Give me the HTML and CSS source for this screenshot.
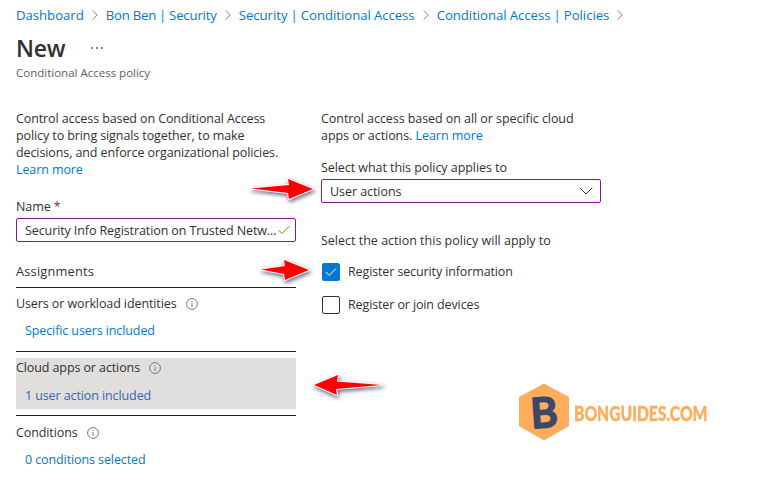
FILE: index.html
```html
<!DOCTYPE html>
<html lang="en">
<head>
    <meta charset="UTF-8">
    <meta name="viewport" content="width=device-width, initial-scale=1.0">
    <title>New - Conditional Access policy</title>
    <link rel="stylesheet" href="styles.css">
</head>
<body>
    <nav class="breadcrumb">
        <a href="#">Dashboard</a>
        <svg class="chevron" viewBox="0 0 6 10"><path d="M0.7 0.5L5.2 5L0.7 9.5"/></svg>
        <a class="tenant" href="#">Bon Ben | Security</a>
        <svg class="chevron" viewBox="0 0 6 10"><path d="M0.7 0.5L5.2 5L0.7 9.5"/></svg>
        <a href="#">Security | Conditional Access</a>
        <svg class="chevron" viewBox="0 0 6 10"><path d="M0.7 0.5L5.2 5L0.7 9.5"/></svg>
        <a href="#">Conditional Access | Policies</a>
        <svg class="chevron" viewBox="0 0 6 10"><path d="M0.7 0.5L5.2 5L0.7 9.5"/></svg>
    </nav>
    <header class="header">
        <div class="title-row">
            <h1>New</h1>
            <svg class="more" viewBox="0 0 12 2"><path d="M0 0h2v2H0zM5 0h2v2H5zM10 0h2v2h-2z"/></svg>
        </div>
        <p class="subtitle">Conditional Access policy</p>
    </header>
    <main class="columns">
        <section class="column">
            <p class="intro">Control access based on Conditional Access<br>policy to bring signals together, to make<br>decisions, and enforce organizational policies.<br><a href="#">Learn more</a></p>
            <div class="label name-label">Name <span class="required">*</span></div>
            <div class="field">
                <span>Security Info Registration on Trusted Netw...</span>
                <svg class="valid" viewBox="0 0 12 10"><path d="M0.5 5L4 8.5L11.5 1"/></svg>
            </div>
            <h2>Assignments</h2>
            <div class="item">
                <div class="item-body">
                    <div class="item-title">Users or workload identities
                        <svg class="info" viewBox="0 0 12 12"><circle cx="6" cy="6" r="5.4"/><path d="M6 5v4M6 3v1"/></svg>
                    </div>
                    <a href="#">Specific users included</a>
                </div>
            </div>
            <div class="item">
                <div class="item-body selected">
                    <div class="item-title">Cloud apps or actions
                        <svg class="info" viewBox="0 0 12 12"><circle cx="6" cy="6" r="5.4"/><path d="M6 5v4M6 3v1"/></svg>
                    </div>
                    <a href="#">1 user action included</a>
                </div>
            </div>
            <div class="item conditions">
                <div class="item-body">
                    <div class="item-title">Conditions
                        <svg class="info" viewBox="0 0 12 12"><circle cx="6" cy="6" r="5.4"/><path d="M6 5v4M6 3v1"/></svg>
                    </div>
                    <a href="#">0 conditions selected</a>
                </div>
            </div>
        </section>
        <section class="column targets">
            <p class="intro">Control access based on all or specific cloud<br>apps or actions. <a href="#">Learn more</a></p>
            <div class="label applies-label">Select what this policy applies to</div>
            <div class="field">
                <span>User actions</span>
                <svg class="caret" viewBox="0 0 14 8"><path d="M0.7 0.7L7 7L13.3 0.7"/></svg>
            </div>
            <div class="label action-label">Select the action this policy will apply to</div>
            <div class="option">
                <span class="checkbox checked"><svg viewBox="0 0 12 10"><path d="M0.8 5L4.2 8.4L11 1.4"/></svg></span>
                <span class="option-text">Register security information</span>
            </div>
            <div class="option">
                <span class="checkbox"></span>
                <span class="option-text">Register or join devices</span>
            </div>
        </section>
    </main>

    <!-- callouts over the form -->
    <svg class="arrow arrow-select" viewBox="0 0 64 22"><path d="M1 10.5L39 7L38 1L63 11L39 21L38 15Z"/></svg>
    <svg class="arrow arrow-check" viewBox="0 0 50 22"><path d="M1 10.5L25 7L24 1L49 11L25 21L24 15Z"/></svg>
    <svg class="arrow arrow-item" viewBox="0 0 70 22"><path d="M69 11L24 7.5L25 1L1 11L24 21L23 15Z"/></svg>

    <div class="brand">
        <svg class="brand-mark" viewBox="0 0 52 58">
            <path class="hex" d="M26 0.5L51 14V43L26 57.5L1 43V14Z"/>
            <text x="26" y="44" text-anchor="middle" transform="rotate(-4 26 29)">B</text>
        </svg>
        <span class="brand-name">BONGUIDES.COM</span>
    </div>
</body>
</html>
```

FILE: styles.css
```css
* {
    box-sizing: border-box;
}
body {
    margin: 0;
    width: 768px;
    height: 477px;
    overflow: hidden;
    position: relative;
    background: #fff;
    color: #323130;
    font-family: "Open Sans", "Noto Sans", sans-serif;
    font-size: 12.5px;
    line-height: 17px;
    letter-spacing: -0.1px;
}
a {
    color: #0078d4;
    text-decoration: none;
}
h1, h2, p {
    margin: 0;
    font-weight: normal;
}
svg {
    display: block;
    fill: none;
    flex: none;
}
.breadcrumb {
    display: flex;
    align-items: center;
    gap: 8px;
    height: 30px;
    padding-left: 16px;
    font-size: 13.2px;
    letter-spacing: -0.04px;
    word-spacing: -0.3px;
    white-space: nowrap;
}
.tenant {
    letter-spacing: -0.18px;
}
.chevron {
    width: 6px;
    height: 10px;
    stroke: #8a8886;
}
.title-row {
    display: flex;
    align-items: center;
    height: 36px;
    padding-left: 16px;
}
h1 {
    width: 75px;
    font-size: 23px;
    font-weight: 600;
    letter-spacing: -0.2px;
}
.more {
    width: 12px;
    height: 2px;
    fill: #8a8886;
}
.subtitle {
    padding-left: 16px;
    height: 44px;
    line-height: 14px;
    font-size: 11.5px;
    letter-spacing: 0;
    color: #605e5c;
}
.columns {
    display: flex;
    gap: 25px;
    padding-left: 16px;
    white-space: nowrap;
}
.column {
    width: 280px;
}
.targets {
    letter-spacing: -0.06px;
}
.name-label {
    margin: 20px 0 3px;
}
.required {
    color: #a4262c;
}
.applies-label {
    margin: 15px 0 3px;
}
.action-label {
    margin: 29px 0 14px;
    letter-spacing: 0;
}
.field {
    display: flex;
    align-items: center;
    justify-content: space-between;
    height: 24px;
    padding: 0 4px 0 8px;
    border: 1px solid #881798;
    border-radius: 2px;
}
.valid {
    width: 12px;
    height: 10px;
    margin-right: 1px;
    stroke: #57a300;
}
.caret {
    width: 14px;
    height: 8px;
    margin-right: 3px;
    stroke: #323130;
}
h2 {
    height: 45px;
    padding-top: 21px;
    font-size: 12.8px;
    letter-spacing: 0.2px;
}
.item {
    height: 64px;
    padding-top: 6px;
    border-top: 1px solid #201f1e;
}
.item-body {
    height: 51px;
    padding-top: 1px;
}
.item-body a {
    display: block;
    padding: 10px 0 0 9px;
}
.item-title {
    display: flex;
    align-items: center;
    gap: 9px;
}
.selected {
    background: #e1dfdd;
}
.selected a {
    padding-top: 11px;
    color: #3165bb;
}
.conditions {
    padding-top: 7px;
}
.info {
    width: 12px;
    height: 12px;
    stroke: #797775;
}
.option {
    display: flex;
    align-items: center;
    gap: 8px;
    height: 18px;
    margin: 0 0 15px 1px;
}
.option-text {
    padding-bottom: 2px;
    letter-spacing: -0.12px;
}
.checkbox {
    display: flex;
    align-items: center;
    justify-content: center;
    width: 18px;
    height: 18px;
    border: 1px solid #323130;
    border-radius: 2px;
}
.checked {
    background: #0078d4;
    border-color: #0078d4;
}
.checked svg {
    width: 12px;
    height: 10px;
    stroke: #fff;
}
.arrow {
    position: absolute;
    overflow: visible;
    fill: #f00;
    stroke: #fff;
    stroke-width: 2;
    stroke-linejoin: round;
    paint-order: stroke;
    filter: drop-shadow(1px 2px 2px rgba(30, 10, 60, 0.65));
}
.arrow-select {
    left: 250px;
    top: 178px;
    width: 64px;
    height: 22px;
}
.arrow-check {
    left: 260px;
    top: 259px;
    width: 50px;
    height: 22px;
}
.arrow-item {
    left: 313px;
    top: 374px;
    width: 70px;
    height: 22px;
}
.brand {
    position: absolute;
    left: 518px;
    top: 383px;
    display: flex;
    align-items: center;
    letter-spacing: 0;
}
.brand-mark {
    width: 52px;
    height: 58px;
    overflow: visible;
}
.hex {
    fill: #ffad5c;
}
.brand-mark text {
    fill: #3d4766;
    stroke: #3d4766;
    stroke-width: 2.4;
    stroke-linejoin: round;
    font: bold 41px Lato, sans-serif;
    font-weight: 500;
}
.brand-name {
    margin-left: 4px;
    color: #ffad5c;
    font: 900 21px Lato, sans-serif;
    -webkit-text-stroke: 0.4px #ffad5c;
    transform: scaleX(0.745);
    transform-origin: left;
}
```
